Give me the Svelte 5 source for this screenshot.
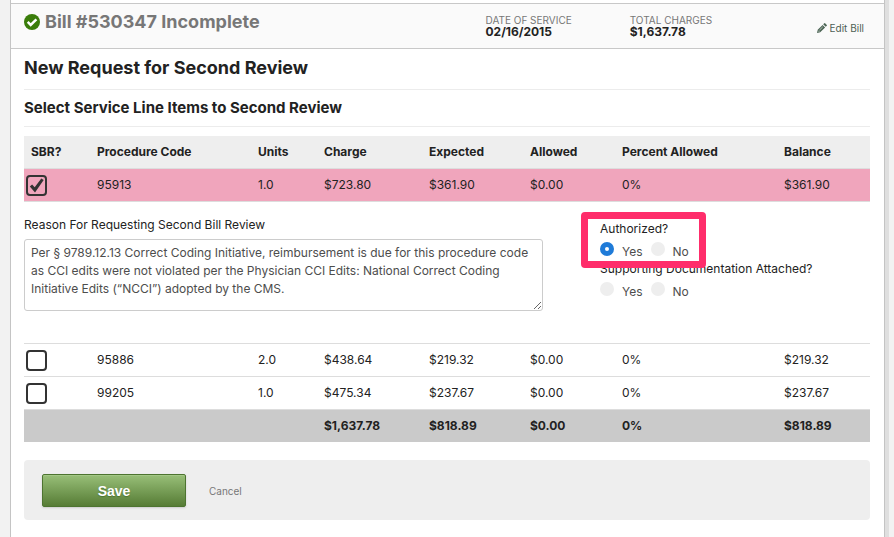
<script>
  const columns = [
    { label: 'SBR?', width: 66 },
    { label: 'Procedure Code', width: 161 },
    { label: 'Units', width: 66 },
    { label: 'Charge', width: 105 },
    { label: 'Expected', width: 101 },
    { label: 'Allowed', width: 92 },
    { label: 'Percent Allowed', width: 162 },
    { label: 'Balance', width: 93 }
  ];
  const totalWidth = columns.reduce((sum, c) => sum + c.width, 0);

  let items = $state([
    {
      code: '95913', units: '1.0', charge: '$723.80', expected: '$361.90',
      allowed: '$0.00', percent: '0%', balance: '$361.90', selected: true,
      authorized: 'yes', attached: '',
      reason: 'Per § 9789.12.13 Correct Coding Initiative, reimbursement is due for this procedure code as CCI edits were not violated per the Physician CCI Edits: National Correct Coding Initiative Edits (“NCCI”) adopted by the CMS.'
    },
    {
      code: '95886', units: '2.0', charge: '$438.64', expected: '$219.32',
      allowed: '$0.00', percent: '0%', balance: '$219.32', selected: false,
      authorized: '', attached: '', reason: ''
    },
    {
      code: '99205', units: '1.0', charge: '$475.34', expected: '$237.67',
      allowed: '$0.00', percent: '0%', balance: '$237.67', selected: false,
      authorized: '', attached: '', reason: ''
    }
  ]);
</script>

<div class="page">
  <header class="bill-header">
    <h1>
      <svg class="status-icon" viewBox="0 0 16 16" aria-hidden="true">
        <circle cx="8" cy="8" r="8" fill="#3a7d0a" />
        <path d="M3.7 7.9l3 3 5.7-5.5" fill="none" stroke="#fff" stroke-width="2.5" />
      </svg>
      Bill #530347 Incomplete
    </h1>
    <dl>
      <dt>DATE OF SERVICE</dt>
      <dd>02/16/2015</dd>
    </dl>
    <dl>
      <dt>TOTAL CHARGES</dt>
      <dd>$1,637.78</dd>
    </dl>
    <a class="edit-link" href="#edit">
      <svg viewBox="0 0 10 10" aria-hidden="true">
        <path d="M0 10l.7-3.2L5.6 1.9l2.5 2.5-4.9 4.9zM6.2 1.3L7.3.2q.4-.4.8 0l1.7 1.7q.4.4 0 .8L8.7 3.8z" fill="#4d6656" />
        <path d="M1.1 7.6l1.3 1.3M2.4 7.2l3.4-3.4" stroke="#fafafa" stroke-width=".6" />
      </svg>
      Edit Bill
    </a>
  </header>

  <main>
    <h2>New Request for Second Review</h2>
    <h3>Select Service Line Items to Second Review</h3>

    <table>
      <colgroup>
        {#each columns as col}
          <col style="width: {(col.width / totalWidth) * 100}%" />
        {/each}
      </colgroup>
      <thead>
        <tr>
          {#each columns as col}
            <th scope="col">{col.label}</th>
          {/each}
        </tr>
      </thead>
      <tbody>
        {#each items as item (item.code)}
          <tr class:selected={item.selected}>
            <td class="check-cell">
              <label class="check">
                <input type="checkbox" bind:checked={item.selected} aria-label="Request second review of {item.code}" />
                {#if item.selected}
                  <svg viewBox="0 0 21 21" aria-hidden="true">
                    <path d="M3.8 11.4l2.3-2 2.6 2.8 6.6-8.6 2.4 1.3-8.7 12.5z" fill="#333" />
                  </svg>
                {/if}
              </label>
            </td>
            <td>{item.code}</td>
            <td>{item.units}</td>
            <td>{item.charge}</td>
            <td>{item.expected}</td>
            <td>{item.allowed}</td>
            <td>{item.percent}</td>
            <td>{item.balance}</td>
          </tr>
          {#if item.selected}
            <tr>
              <td class="detail-cell" colspan={columns.length}>
                <div class="detail">
                  <div class="reason">
                    <label for="reason-{item.code}">Reason For Requesting Second Bill Review</label>
                    <textarea id="reason-{item.code}" bind:value={item.reason} spellcheck="false"></textarea>
                  </div>
                  <div class="questions">
                    <div class="highlighted">
                      <fieldset>
                        <legend>Authorized?</legend>
                        <div class="options">
                          <label><input type="radio" value="yes" bind:group={item.authorized} />Yes</label>
                          <label><input type="radio" value="no" bind:group={item.authorized} />No</label>
                        </div>
                      </fieldset>
                    </div>
                    <fieldset>
                      <legend>Supporting Documentation Attached?</legend>
                      <div class="options">
                        <label><input type="radio" value="yes" bind:group={item.attached} />Yes</label>
                        <label><input type="radio" value="no" bind:group={item.attached} />No</label>
                      </div>
                    </fieldset>
                  </div>
                </div>
              </td>
            </tr>
          {/if}
        {/each}
      </tbody>
      <tfoot>
        <tr>
          <td colspan="3"></td>
          <td>$1,637.78</td>
          <td>$818.89</td>
          <td>$0.00</td>
          <td>0%</td>
          <td>$818.89</td>
        </tr>
      </tfoot>
    </table>

    <div class="actions">
      <button type="button" class="save">Save</button>
      <a href="#cancel">Cancel</a>
    </div>
  </main>
</div>

<style>
  :global(body) {
    background: #f2f2f2;
  }

  .page {
    box-sizing: border-box;
    min-height: 100vh;
    margin: 0 9px 0 10px;
    padding-top: 3px;
    background: #fff;
    border: solid #c4c4c4;
    border-width: 0 1px;
    box-shadow: 4px 0 0 #dfdfdf;
    color: #222;
    font-family: Inter, "Liberation Sans", sans-serif;
    font-size: 12px;
    line-height: 20px;
  }

  .bill-header {
    display: grid;
    grid-template-columns: 461fr 144fr 144fr 97fr;
    align-items: start;
    height: 44px;
    padding: 0 13px;
    background: #fafafa;
    border: solid #c8c8c8;
    border-width: 1px 0;
  }

  h1, h2, h3, dl, dd {
    margin: 0;
  }

  h1 {
    display: flex;
    align-items: center;
    gap: 5px;
    padding-top: 8px;
    color: #777;
    font-size: 18px;
    line-height: 20px;
  }

  .status-icon {
    width: 16px;
    height: 16px;
  }

  dl {
    padding-top: 11px;
    line-height: 11px;
  }

  dt {
    color: #777;
    font-size: 10px;
  }

  dd {
    color: #222;
    font-size: 12px;
    font-weight: 700;
  }

  .edit-link {
    display: flex;
    align-items: center;
    justify-content: flex-end;
    gap: 3px;
    padding: 14px 7px 0 0;
    color: #4d5e54;
    font-size: 10px;
    text-decoration: none;
    white-space: nowrap;
  }

  .edit-link svg {
    width: 10px;
    height: 10px;
  }

  main {
    padding: 0 14px 16px 13px;
  }

  h2 {
    padding: 7px 0 9px;
    border-bottom: 1px solid #ececec;
    font-size: 18px;
    line-height: 24px;
  }

  h3 {
    margin-bottom: 9px;
    padding: 8px 0;
    border-bottom: 1px solid #ececec;
    font-size: 15px;
    line-height: 20px;
  }

  table {
    width: 100%;
    border-spacing: 0;
    table-layout: fixed;
  }

  th, td {
    height: 32px;
    padding: 0 0 0 7px;
    border-bottom: 1px solid #ddd;
    text-align: left;
    white-space: nowrap;
  }

  th {
    background: #eee;
    font-weight: 700;
  }

  .selected td {
    background: #f0a5bc;
  }

  td.check-cell {
    padding-left: 2px;
  }

  .check {
    display: grid;
    width: 21px;
  }

  .check input, .check svg {
    grid-area: 1 / 1;
    width: 21px;
    height: 21px;
  }

  .check input {
    appearance: none;
    box-sizing: border-box;
    margin: 0;
    border: 2px solid #333;
    border-radius: 4px;
  }

  .check svg {
    pointer-events: none;
  }

  td.detail-cell {
    height: 141px;
    padding: 0;
    vertical-align: top;
    white-space: normal;
  }

  .detail {
    display: grid;
    grid-template-columns: 519fr 270fr;
    column-gap: 57px;
  }

  .reason {
    display: flex;
    flex-direction: column;
    gap: 4px;
    padding-top: 13px;
  }

  textarea {
    box-sizing: border-box;
    width: 100%;
    height: 72px;
    margin: 0;
    padding: 4px 2px 4px 6px;
    border: 1px solid #ccc;
    border-radius: 3px;
    background: #fff;
    color: #4d4d4d;
    font: 12px/18px Inter, "Liberation Sans", sans-serif;
  }

  .questions {
    padding-top: 17px;
  }

  fieldset {
    min-width: 0;
    margin: 0;
    padding: 0;
    border: 0;
  }

  legend {
    padding: 0;
  }

  /* marker frame around the question */
  .highlighted {
    position: relative;
  }

  .highlighted::after {
    content: '';
    position: absolute;
    z-index: 1;
    top: -7px;
    left: -19px;
    box-sizing: border-box;
    width: 125px;
    height: 56px;
    border: 7px solid #ff2d6b;
    border-radius: 4px;
    pointer-events: none;
  }

  .options {
    display: flex;
    gap: 8px;
    height: 20px;
    padding-top: 3px;
    margin-bottom: -3px;
    color: #4d4d4d;
  }

  .options label {
    display: flex;
    align-items: flex-start;
    gap: 8px;
  }

  .options input {
    appearance: none;
    box-sizing: border-box;
    width: 14px;
    height: 14px;
    margin: 0;
    border-radius: 50%;
    background: #eee;
  }

  .options input:checked {
    border: 5px solid #1f7bd8;
    background: #fff;
  }

  tfoot td {
    background: #cacaca;
    border-bottom: 0;
    font-weight: 700;
  }

  .actions {
    display: flex;
    align-items: center;
    gap: 23px;
    margin-top: 18px;
    padding: 14px 18px 13px;
    background: #eee;
    border-radius: 4px;
  }

  .save {
    width: 144px;
    height: 33px;
    padding: 0;
    border: 1px solid #4d7430;
    border-radius: 2px;
    background: linear-gradient(#98bf78, #567c35);
    box-shadow: inset 0 1px 0 #a3c786, 0 1px 2px #ccc;
    color: #fff;
    font: bold 14px/20px "Liberation Sans", sans-serif;
    text-shadow: 0 1px 1px #4d7430;
  }

  .actions a {
    color: #777;
    font-size: 10px;
    text-decoration: none;
  }
</style>
